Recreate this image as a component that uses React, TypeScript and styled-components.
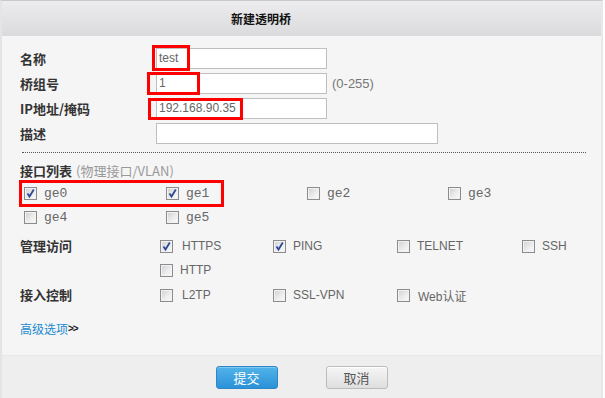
import React from "react";
import styled, { createGlobalStyle } from "styled-components";

const Global = createGlobalStyle`
  html, body { margin: 0; padding: 0; background: #ffffff; }
  * { box-sizing: border-box; }
`;

const CJK = `"Noto Sans CJK SC", "Liberation Sans", sans-serif`;
const SANS = `"Liberation Sans", "Noto Sans CJK SC", sans-serif`;

const Dialog = styled.div`
  width: 603px;
  height: 398px;
  display: flex;
  flex-direction: column;
  border-top: 1px solid #c9c9c9;
  border-left: 2px solid #e4e4e4;
  border-right: 2px solid #e8e8e8;
  background: #f5f5f5;
  font-family: ${CJK};
`;

const Header = styled.div`
  height: 35px;
  flex: none;
  background: linear-gradient(#ececee, #dbdbdd);
  display: flex;
  align-items: center;
  padding-left: 229px;
  font-size: 12px;
  font-weight: bold;
  color: #111;
`;

const Body = styled.div`
  flex: none;
  height: 320px;
  padding: 12px 15px 0 18px;
  display: flex;
  flex-direction: column;
  border-bottom: 1px solid #e6e6e6;
`;

const FieldList = styled.div`
  display: flex;
  flex-direction: column;
  gap: 4px;
`;

const FieldRow = styled.div`
  display: flex;
  align-items: center;
  height: 21px;
`;

const Label = styled.div`
  width: 136px;
  flex: none;
  font-size: 13px;
  font-weight: bold;
  color: #333;
`;

const Wrap = styled.div`
  position: relative;
  display: flex;
  align-items: center;
`;

const Input = styled.div<{ $w: number }>`
  width: ${(p) => p.$w}px;
  height: 21px;
  background: #fff;
  border: 1px solid #bfbfbf;
  font-family: ${SANS};
  font-size: 12px;
  color: #666;
  line-height: 19px;
  padding-left: 2px;
`;

const Hint = styled.span`
  margin-left: 5px;
  font-family: ${SANS};
  font-size: 13px;
  color: #777;
`;

const RedMark = styled.div<{ $l: number; $t: number; $w: number; $h: number }>`
  position: absolute;
  left: ${(p) => p.$l}px;
  top: ${(p) => p.$t}px;
  width: ${(p) => p.$w}px;
  height: ${(p) => p.$h}px;
  border: 3px solid #ff0000;
  pointer-events: none;
`;

const Divider = styled.div`
  margin-top: 8px;
  margin-left: 2px;
  height: 1px;
  border-top: 1px dotted #555;
`;

const SectionTitle = styled.div`
  margin-top: 7px;
  height: 20px;
  display: flex;
  align-items: center;
  font-size: 13px;
  font-weight: bold;
  color: #333;
`;

const SubNote = styled.span`
  font-weight: normal;
  color: #999;
  font-size: 13px;
  margin-left: 4px;
`;

const IfaceGrid = styled.div`
  position: relative;
  display: grid;
  grid-template-columns: 142px 141px 141px 141px;
  grid-auto-rows: 24px;
  padding-left: 4px;
  margin-top: 1px;
`;

const OptRow = styled.div<{ $mt?: number }>`
  display: flex;
  align-items: flex-start;
  margin-top: ${(p) => p.$mt ?? 0}px;
`;

const OptLabel = styled.div`
  width: 140px;
  flex: none;
  height: 23px;
  display: flex;
  align-items: center;
  font-size: 13px;
  font-weight: bold;
  color: #333;
`;

const OptGrid = styled.div`
  display: grid;
  grid-template-columns: 113px 124px 125px 60px;
  grid-auto-rows: 24px;
`;

const Opt = styled.label<{ $gap?: number }>`
  display: flex;
  align-items: center;
  gap: ${(p) => p.$gap ?? 9}px;
  height: 24px;
`;

const OptText = styled.span<{ $mono?: boolean }>`
  font-family: ${(p) => (p.$mono ? `"Liberation Mono", monospace` : SANS)};
  font-size: ${(p) => (p.$mono ? 13 : 12)}px;
  color: #666;
  white-space: nowrap;
`;

const Box = styled.span`
  width: 13px;
  height: 13px;
  flex: none;
  border: 1px solid #8c8c8c;
  background: linear-gradient(135deg, #cfcfd2 0%, #ececee 55%, #fbfbfb 100%);
  box-shadow: inset 0 0 0 1px #f2f2f2;
  display: flex;
  align-items: center;
  justify-content: center;
`;

const Check = ({ on }: { on?: boolean }) => (
  <Box>
    {on && (
      <svg width="11" height="11" viewBox="0 0 11 11">
        <path d="M2.5 5.5 L4.5 8.5 L8.8 1.5" fill="none" stroke="#2c4a93" strokeWidth="1.8" />
      </svg>
    )}
  </Box>
);

const Option = ({ text, on, mono, gap }: { text: string; on?: boolean; mono?: boolean; gap?: number }) => (
  <Opt $gap={gap}>
    <Check on={on} />
    <OptText $mono={mono}>{text}</OptText>
  </Opt>
);

const AdvLink = styled.div`
  margin-top: 11px;
  height: 20px;
  display: flex;
  align-items: center;
  font-size: 12px;
  color: #1a8bd2;
`;

const Arrows = styled.span`
  color: #222;
  font-family: ${SANS};
  font-weight: bold;
  font-size: 10px;
  letter-spacing: -1px;
`;

const Footer = styled.div`
  flex: 1;
  background: #eeeeee;
  display: flex;
  justify-content: center;
  gap: 48px;
  padding-top: 10px;
`;

const Button = styled.button<{ $primary?: boolean }>`
  width: 62px;
  height: 23px;
  border-radius: 3px;
  font-family: ${CJK};
  font-size: 13px;
  padding: 0;
  line-height: 21px;
  cursor: pointer;
  border: 1px solid ${(p) => (p.$primary ? "#2f86c7" : "#bcbcbc")};
  color: ${(p) => (p.$primary ? "#ffffff" : "#555555")};
  background: ${(p) =>
    p.$primary
      ? "linear-gradient(#52b3e9, #2b92d8)"
      : "linear-gradient(#f6f6f6, #dedede)"};
  box-shadow: inset 0 1px 0 ${(p) => (p.$primary ? "#7cc8f0" : "#ffffff")};
`;

export default function App() {
  return (
    <>
      <Global />
      <Dialog>
        <Header>新建透明桥</Header>
        <Body>
          <FieldList>
            <FieldRow>
              <Label>名称</Label>
              <Wrap>
                <Input $w={171}>test</Input>
                <RedMark $l={-4} $t={-3} $w={38} $h={26} />
              </Wrap>
            </FieldRow>
            <FieldRow>
              <Label>桥组号</Label>
              <Wrap>
                <Input $w={171}>1</Input>
                <RedMark $l={-9} $t={-1} $w={53} $h={23} />
                <Hint>(0-255)</Hint>
              </Wrap>
            </FieldRow>
            <FieldRow>
              <Label>IP地址/掩码</Label>
              <Wrap>
                <Input $w={171}>192.168.90.35</Input>
                <RedMark $l={-8} $t={0} $w={95} $h={22} />
              </Wrap>
            </FieldRow>
            <FieldRow>
              <Label>描述</Label>
              <Input $w={282} />
            </FieldRow>
          </FieldList>
          <Divider />
          <SectionTitle>
            接口列表<SubNote>(物理接口/VLAN)</SubNote>
          </SectionTitle>
          <IfaceGrid>
            <Option text="ge0" on mono gap={7} />
            <Option text="ge1" on mono gap={7} />
            <Option text="ge2" mono gap={7} />
            <Option text="ge3" mono gap={7} />
            <Option text="ge4" mono gap={7} />
            <Option text="ge5" mono gap={7} />
            <RedMark $l={-1} $t={-1} $w={205} $h={27} />
          </IfaceGrid>
          <OptRow $mt={5}>
            <OptLabel>管理访问</OptLabel>
            <OptGrid>
              <Option text="HTTPS" on />
              <Option text="PING" on gap={7} />
              <Option text="TELNET" gap={7} />
              <Option text="SSH" gap={7} />
              <Option text="HTTP" gap={7} />
            </OptGrid>
          </OptRow>
          <OptRow $mt={1}>
            <OptLabel>接入控制</OptLabel>
            <OptGrid>
              <Option text="L2TP" />
              <Option text="SSL-VPN" gap={7} />
              <Option text="Web认证" gap={8} />
            </OptGrid>
          </OptRow>
          <AdvLink>
            高级选项<Arrows>&gt;&gt;</Arrows>
          </AdvLink>
        </Body>
        <Footer>
          <Button $primary>提交</Button>
          <Button>取消</Button>
        </Footer>
      </Dialog>
    </>
  );
}
